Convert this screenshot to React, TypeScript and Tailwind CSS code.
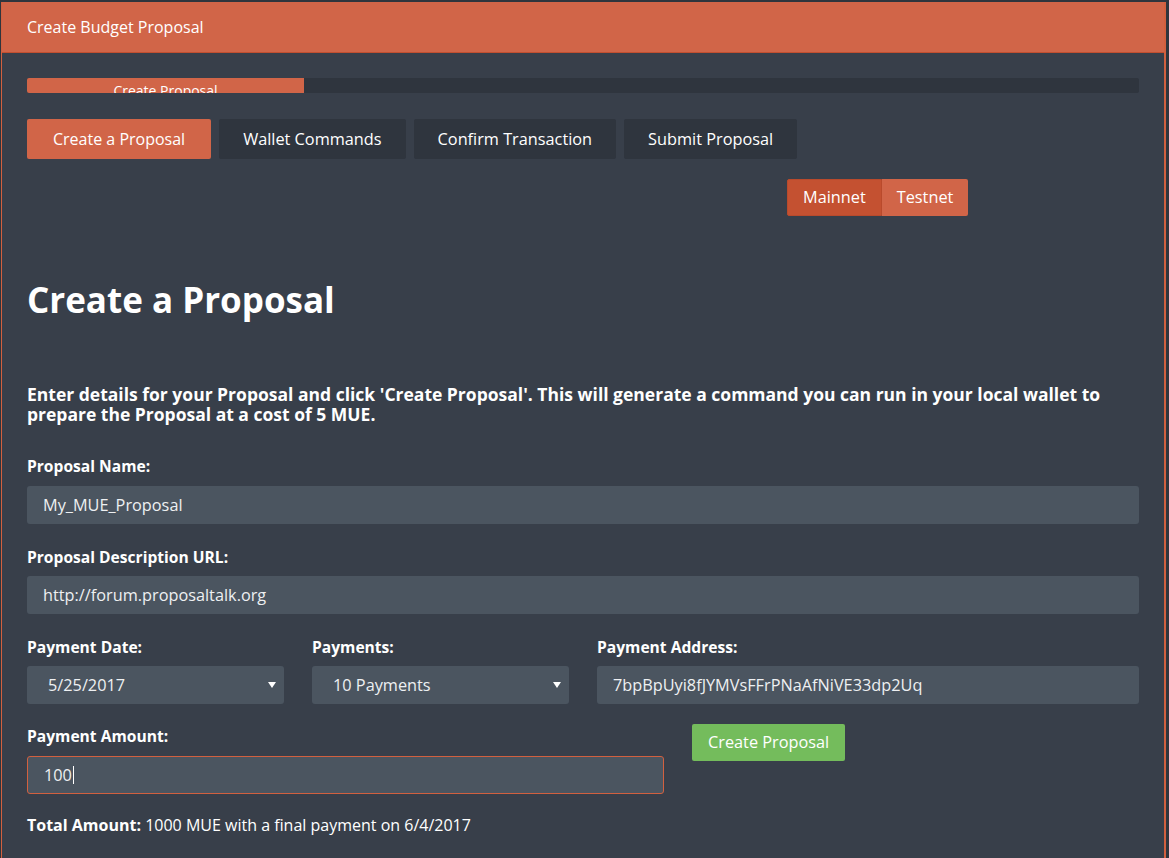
import { useState } from "react";

const TABS = ["Create a Proposal", "Wallet Commands", "Confirm Transaction", "Submit Proposal"];

function Caret() {
  return (
    <svg viewBox="0 0 8 6" className="h-[6px] w-[8px] fill-white">
      <path d="M0 0h8L4 6z" />
    </svg>
  );
}

export default function App() {
  const [net, setNet] = useState("Mainnet");

  return (
    <div className="h-[858px] w-full overflow-hidden bg-[#2f353d] pt-[2px] font-['Open_Sans',sans-serif] text-white">
      <div className="ml-[1px] h-full w-[1165px] border-l border-r-2 border-[#d2603f] bg-[#383f4a]">
        {/* Panel header */}
        <div className="flex h-[51px] items-center border-b border-[#c24f30] bg-[#d16548] pl-[25px] text-base">
          Create Budget Proposal
        </div>

        <div className="px-[25px] pt-[25px]">
          {/* Progress */}
          <div className="h-[15px] overflow-hidden rounded-[2px] bg-[#2f353e]">
            <div className="flex h-full w-[277px] justify-center overflow-hidden bg-[#d16548] pt-[3px] text-sm leading-5">
              Create Proposal
            </div>
          </div>

          {/* Steps */}
          <div className="mt-[26px] flex gap-2">
            {TABS.map((t, i) => (
              <div
                key={t}
                className={
                  i === 0
                    ? "flex h-10 items-center rounded-[2px] bg-[#d16548] px-[26px] text-base"
                    : "flex h-10 items-center rounded-[2px] bg-[#2f353e] px-[24px] text-[16.3px]"
                }
              >
                {t}
              </div>
            ))}
          </div>

          {/* Network switch */}
          <div className="mt-5 flex pl-[760px]">
            {["Mainnet", "Testnet"].map((n) => (
              <button
                key={n}
                onClick={() => setNet(n)}
                className={
                  net === n
                    ? "h-[37px] rounded-l-[2px] border border-[#b94a2c] bg-[#c45131] px-[15px] text-[16.3px]"
                    : "h-[37px] rounded-r-[2px] bg-[#d16548] px-[15px] text-[16.3px]"
                }
              >
                {n}
              </button>
            ))}
          </div>

          <h1 className="mt-16 text-[35px] font-bold leading-[40px]">Create a Proposal</h1>

          <p className="mt-16 text-[17.5px] font-bold leading-5">
            Enter details for your Proposal and click 'Create Proposal'. This will generate a command you can run in your local wallet to prepare the Proposal at a cost of 5 MUE.
          </p>

          {/* Form */}
          <div className="mt-[32px] text-[15.6px] font-bold leading-5">Proposal Name:</div>
          <div className="mt-[10px] flex h-[38px] items-center rounded-[3px] bg-[#4b5560] px-4 text-[16.3px] text-[#eef0f2]">
            My_MUE_Proposal
          </div>

          <div className="mt-[23px] text-[15.6px] font-bold leading-5">Proposal Description URL:</div>
          <div className="mt-[9px] flex h-[38px] items-center rounded-[3px] bg-[#4b5560] px-4 text-[16.3px] text-[#eef0f2]">
            http://forum.proposaltalk.org
          </div>

          <div className="mt-[23px] grid grid-cols-12 gap-x-7">
            <div className="col-span-3">
              <div className="text-[15.6px] font-bold leading-5">Payment Date:</div>
              <div className="mt-[9px] flex h-[38px] items-center justify-between rounded-[3px] bg-[#4b5560] pl-[21px] pr-[8px] text-[16.3px] text-[#eef0f2]">
                5/25/2017
                <Caret />
              </div>
            </div>
            <div className="col-span-3">
              <div className="text-[15.6px] font-bold leading-5">Payments:</div>
              <div className="mt-[9px] flex h-[38px] items-center justify-between rounded-[3px] bg-[#4b5560] pl-[21px] pr-[8px] text-[16.3px] text-[#eef0f2]">
                10 Payments
                <Caret />
              </div>
            </div>
            <div className="col-span-6">
              <div className="text-[15.6px] font-bold leading-5">Payment Address:</div>
              <div className="mt-[9px] flex h-[38px] items-center rounded-[3px] bg-[#4b5560] px-4 text-[16.3px] text-[#eef0f2]">
                7bpBpUyi8fJYMVsFFrPNaAfNiVE33dp2Uq
              </div>
            </div>
          </div>

          <div className="mt-5 grid grid-cols-12 gap-x-7">
            <div className="col-span-7">
              <div className="mt-[2px] text-[15.6px] font-bold leading-5">Payment Amount:</div>
              <div className="mt-[10px] flex h-[38px] items-center rounded-[3px] border border-[#d2603f] bg-[#4b5560] px-4 text-[16.3px] text-[#eef0f2]">
                100<span className="ml-px h-[18px] w-px bg-white" />
              </div>
            </div>
            <div className="col-span-5">
              <button className="h-[37px] rounded-[2px] bg-[#74bc5c] px-4 text-[16.3px]">Create Proposal</button>
            </div>
          </div>

          <p className="mt-[21px] text-base leading-5">
            <span className="font-bold">Total Amount:</span> 1000 MUE with a final payment on 6/4/2017
          </p>
        </div>
      </div>
    </div>
  );
}
